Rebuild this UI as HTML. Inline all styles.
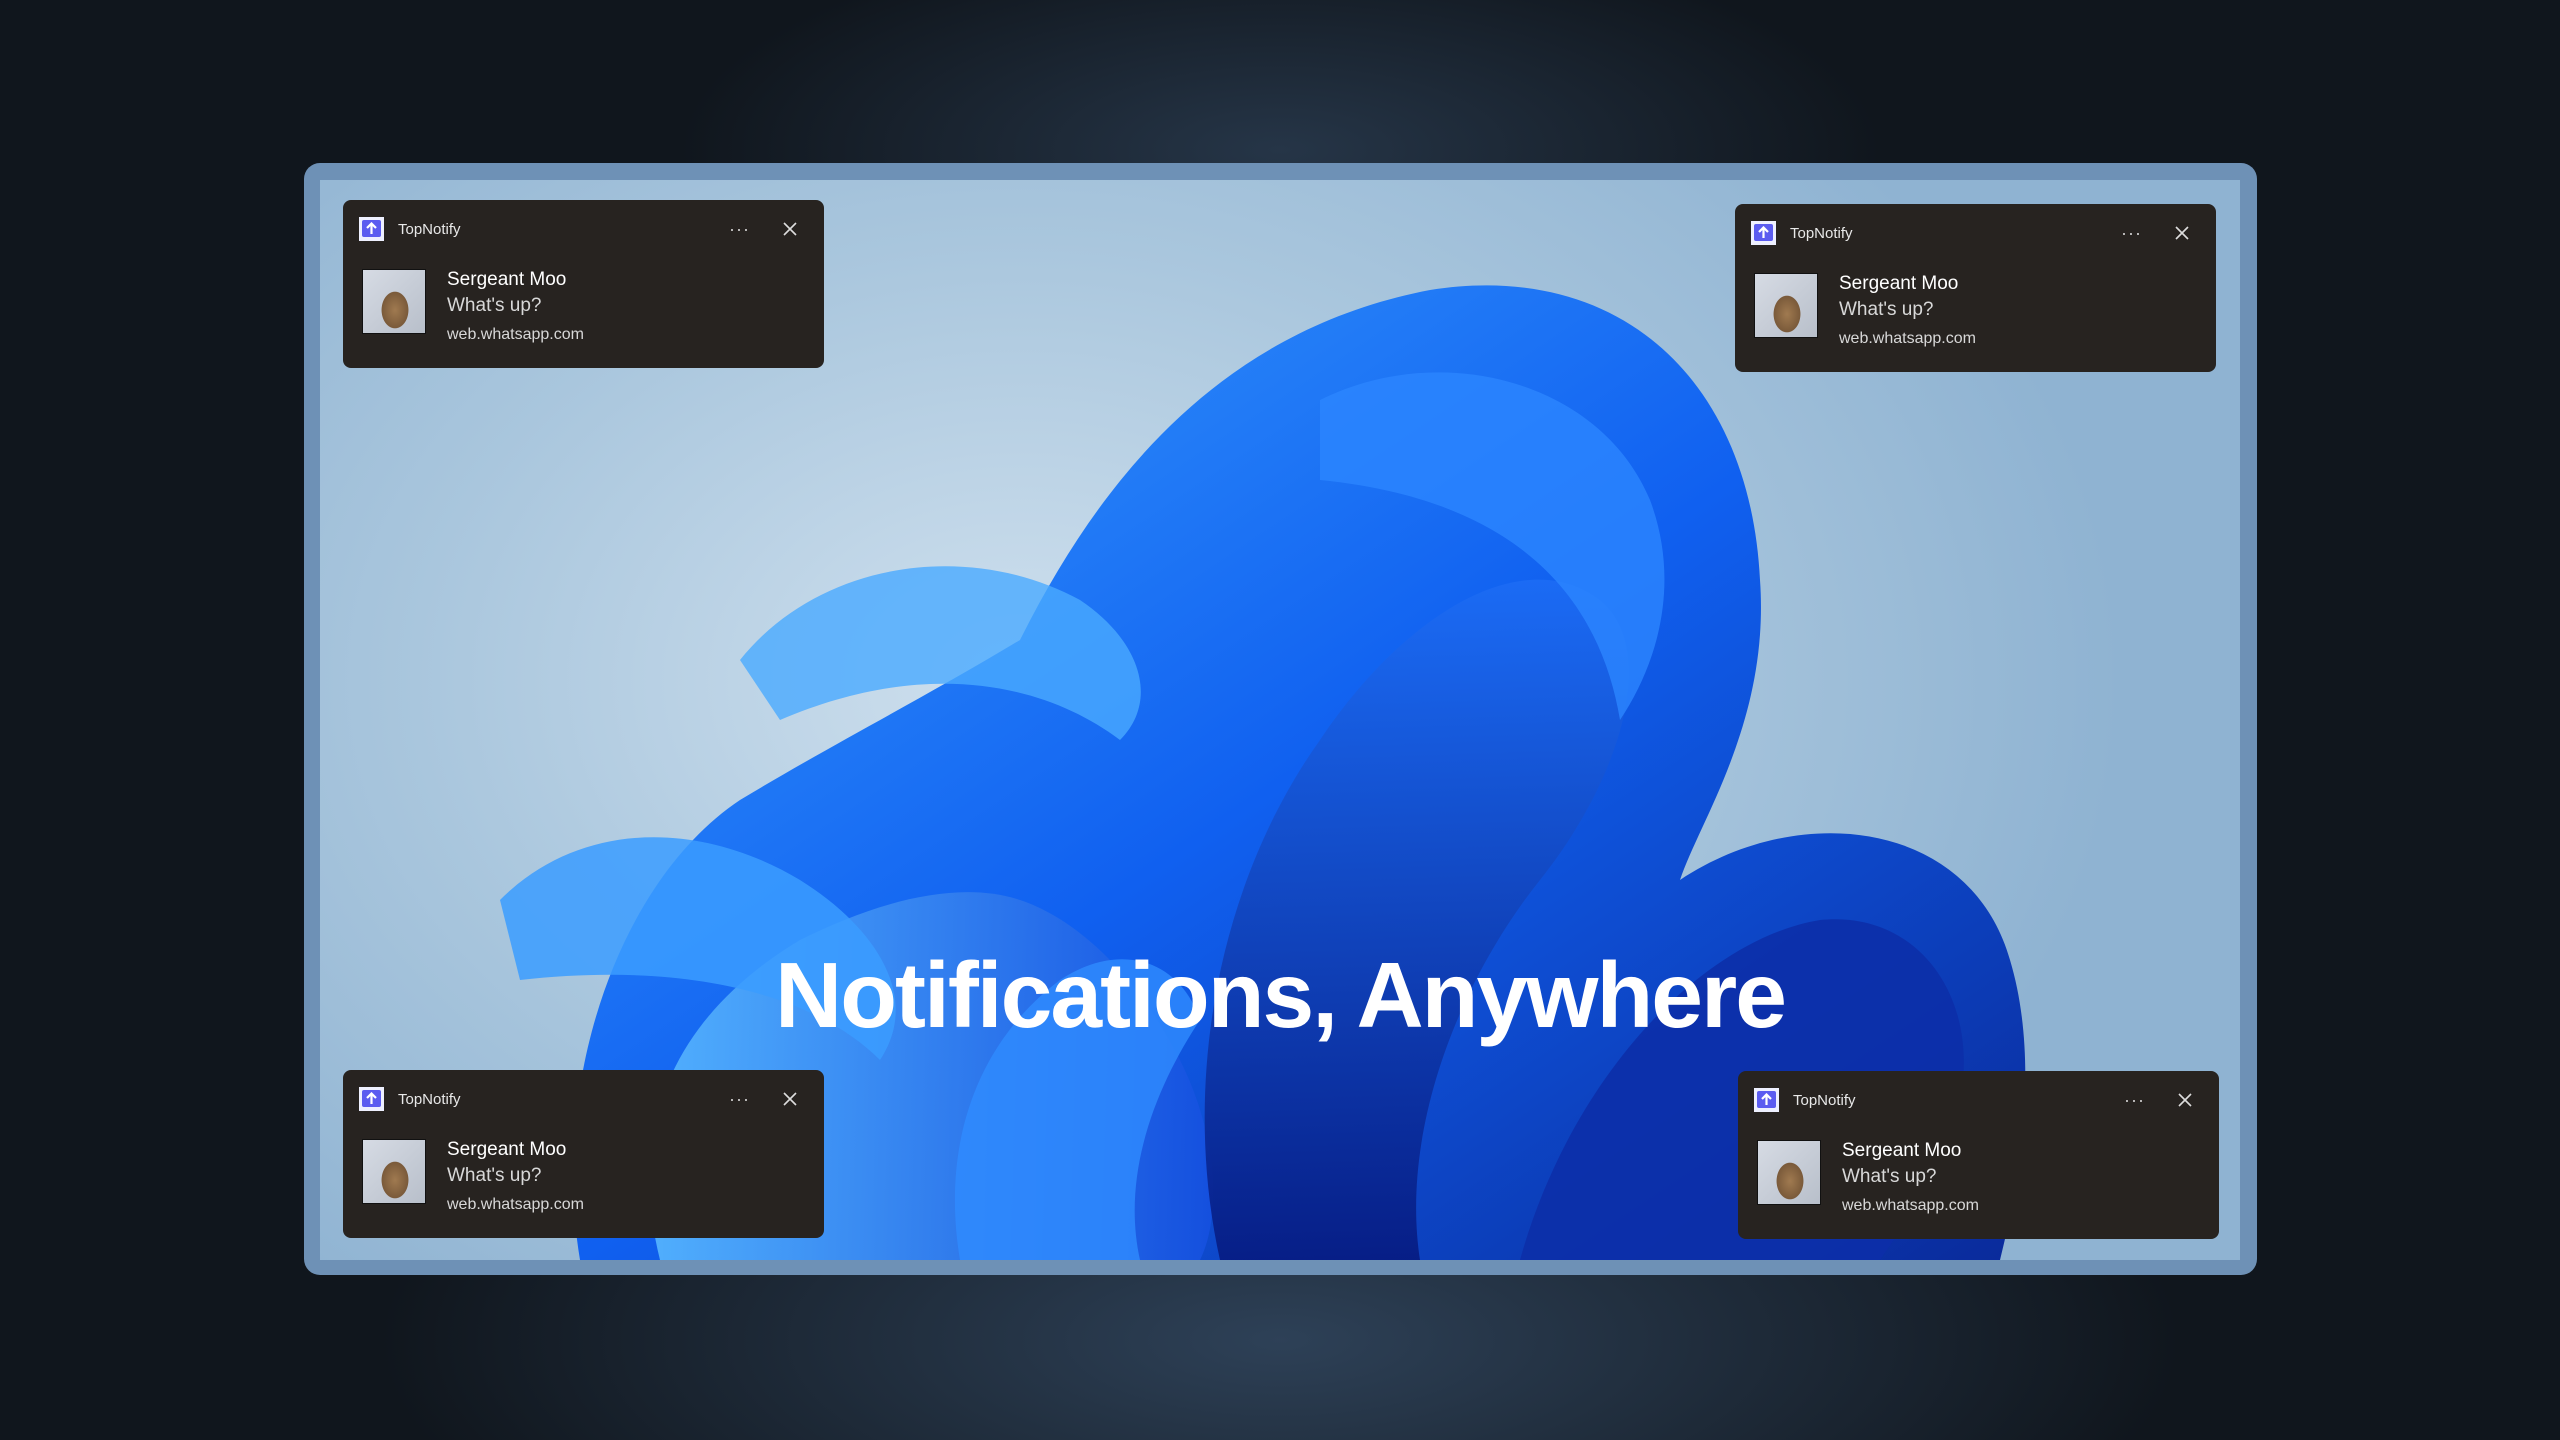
<!DOCTYPE html>
<html><head><meta charset="utf-8"><style>
html,body{margin:0;padding:0;width:2560px;height:1440px;overflow:hidden;}
body{background:#10161d;position:relative;font-family:"Liberation Sans",sans-serif;}
.glow{position:absolute;inset:0;background:
 radial-gradient(ellipse 600px 220px at 1280px 150px,rgba(70,100,135,.4),rgba(0,0,0,0)),
 radial-gradient(ellipse 900px 320px at 1280px 1340px,rgba(70,100,135,.55),rgba(0,0,0,0));}
.frame{position:absolute;left:304px;top:163px;width:1953px;height:1112px;background:#6e91b6;border-radius:16px;}
.screen{position:absolute;left:320px;top:180px;width:1920px;height:1080px;overflow:hidden;
 background:radial-gradient(ellipse 1100px 800px at 700px 500px,#cfe0ee,#a9c6dd 55%,#8fb3d2);}
.n{position:absolute;width:481px;height:168px;background:#272320;border-radius:8px;color:#fff;}
.ic{position:absolute;left:16px;top:17px;width:25px;height:24px;background:#eef0ff;}
.ic i{position:absolute;left:3px;top:3px;width:19px;height:17px;background:#5b5cf0;border-radius:2px;}
.ic svg{position:absolute;left:6px;top:5px;}
.app{position:absolute;left:55px;top:21px;font-size:15px;color:#e8e8e8;}
.dots{position:absolute;left:386px;top:19px;font-size:18px;color:#ccc;letter-spacing:1px;}
.x{position:absolute;left:440px;top:22px;}
.cat{position:absolute;left:19px;top:69px;width:64px;height:65px;
 background:radial-gradient(ellipse 22px 30px at 32px 40px,#a07a50,#7a5a3a 60%,rgba(0,0,0,0) 62%),linear-gradient(135deg,#d6dbe4,#b8bfca);border:1px solid #111;box-sizing:border-box;}
.t1{position:absolute;left:104px;top:69px;font-size:19px;color:#fff;}
.t2{position:absolute;left:104px;top:95px;font-size:19px;color:#d8d8d8;}
.t3{position:absolute;left:104px;top:126px;font-size:16px;color:#d8d8d8;}
.h{position:absolute;left:0;width:2560px;top:940px;text-align:center;font-weight:bold;font-size:93px;letter-spacing:-2px;color:#fff;line-height:110px;}
</style></head><body>
<div class="glow"></div>
<div class="frame"></div>
<div class="screen">
<svg width="1920" height="1080" viewBox="0 0 1920 1080">
<defs>
<linearGradient id="g1" x1="0" y1="0" x2="1" y2="1"><stop offset="0" stop-color="#3aa0ff"/><stop offset=".5" stop-color="#1060f0"/><stop offset="1" stop-color="#0a2a9a"/></linearGradient>
<linearGradient id="g2" x1="0" y1="0" x2="1" y2="0"><stop offset="0" stop-color="#58b8ff"/><stop offset="1" stop-color="#1550e0"/></linearGradient>
<linearGradient id="g3" x1="0" y1="0" x2="0" y2="1"><stop offset="0" stop-color="#1c6cf5"/><stop offset="1" stop-color="#061a80"/></linearGradient>
</defs>
<path d="M260 1080 C230 900 300 700 420 620 C520 560 600 520 700 460 C780 300 900 150 1110 110 C1300 80 1430 200 1440 400 C1450 540 1380 640 1360 700 C1480 620 1650 640 1690 780 C1720 880 1700 1000 1680 1080 Z" fill="url(#g1)"/>
<path d="M340 1080 C300 920 380 820 480 760 C560 720 640 700 700 720 C760 740 820 800 860 880 C900 960 900 1040 880 1080 Z" fill="url(#g2)" opacity=".9"/>
<path d="M180 720 C260 640 380 640 480 700 C560 750 600 820 560 880 C500 820 380 780 200 800 Z" fill="#3b9cff" opacity=".85"/>
<path d="M420 480 C500 380 650 360 760 420 C820 460 840 520 800 560 C720 500 600 480 460 540 Z" fill="#4aaaff" opacity=".8"/>
<path d="M900 1080 C860 900 900 700 1000 560 C1080 440 1200 360 1280 420 C1340 470 1300 600 1220 700 C1140 800 1080 950 1100 1080 Z" fill="url(#g3)" opacity=".9"/>
<path d="M1000 220 C1120 160 1280 200 1330 320 C1360 400 1340 480 1300 540 C1280 420 1200 320 1000 300 Z" fill="#2c86ff" opacity=".8"/>
<path d="M1200 1080 C1250 900 1380 760 1500 740 C1600 730 1660 820 1640 920 C1620 1000 1580 1050 1560 1080 Z" fill="#0c2fa8" opacity=".9"/>
<path d="M640 1080 C620 960 660 860 740 800 C800 760 860 780 880 840 C840 900 800 990 820 1080 Z" fill="#2f8cff" opacity=".8"/>
</svg>
</div>
<div class="h">Notifications, Anywhere</div>

<div class="n" style="left:343px;top:200px"><div class="ic"><i></i><svg width="13" height="13"><path d="M6.5 1.5V12M2 6L6.5 1.5L11 6" stroke="#fff" stroke-width="2.2" fill="none"/></svg></div><div class="app">TopNotify</div><div class="dots">···</div><svg class="x" width="14" height="14"><path d="M1 1L13 13M13 1L1 13" stroke="#ddd" stroke-width="1.6"/></svg><div class="cat"></div><div class="t1">Sergeant Moo</div><div class="t2">What's up?</div><div class="t3">web.whatsapp.com</div></div>
<div class="n" style="left:1735px;top:204px"><div class="ic"><i></i><svg width="13" height="13"><path d="M6.5 1.5V12M2 6L6.5 1.5L11 6" stroke="#fff" stroke-width="2.2" fill="none"/></svg></div><div class="app">TopNotify</div><div class="dots">···</div><svg class="x" width="14" height="14"><path d="M1 1L13 13M13 1L1 13" stroke="#ddd" stroke-width="1.6"/></svg><div class="cat"></div><div class="t1">Sergeant Moo</div><div class="t2">What's up?</div><div class="t3">web.whatsapp.com</div></div>
<div class="n" style="left:343px;top:1070px"><div class="ic"><i></i><svg width="13" height="13"><path d="M6.5 1.5V12M2 6L6.5 1.5L11 6" stroke="#fff" stroke-width="2.2" fill="none"/></svg></div><div class="app">TopNotify</div><div class="dots">···</div><svg class="x" width="14" height="14"><path d="M1 1L13 13M13 1L1 13" stroke="#ddd" stroke-width="1.6"/></svg><div class="cat"></div><div class="t1">Sergeant Moo</div><div class="t2">What's up?</div><div class="t3">web.whatsapp.com</div></div>
<div class="n" style="left:1738px;top:1071px"><div class="ic"><i></i><svg width="13" height="13"><path d="M6.5 1.5V12M2 6L6.5 1.5L11 6" stroke="#fff" stroke-width="2.2" fill="none"/></svg></div><div class="app">TopNotify</div><div class="dots">···</div><svg class="x" width="14" height="14"><path d="M1 1L13 13M13 1L1 13" stroke="#ddd" stroke-width="1.6"/></svg><div class="cat"></div><div class="t1">Sergeant Moo</div><div class="t2">What's up?</div><div class="t3">web.whatsapp.com</div></div>
</body></html>
